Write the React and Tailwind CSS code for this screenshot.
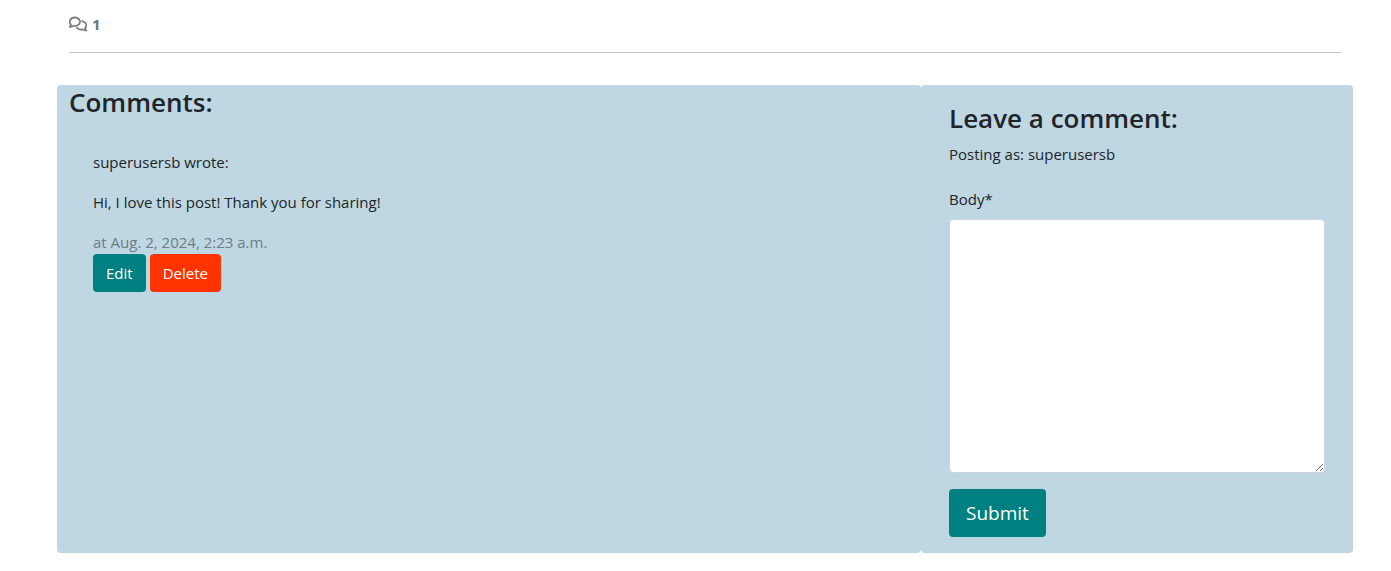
import React from "react";
import { FaRegComments } from "react-icons/fa6";

const heading = "mb-1.5 text-[26px] leading-[35px] font-semibold";
const button = "rounded px-[13px] py-[7px] leading-6 text-white";

function CommentList() {
  return (
    <section className="w-2/3 rounded bg-[#bed7e2] px-3">
      <h3 className={heading}>Comments:</h3>
      <article className="p-6">
        <p className="mb-4">superusersb wrote:</p>
        <p className="mb-4">Hi, I love this post! Thank you for sharing!</p>
        <p className="text-[#6c7d86]">at Aug. 2, 2024, 2:23 a.m.</p>
        <div className="flex gap-1">
          <button type="button" className={`${button} bg-[#008080]`}>Edit</button>
          <button type="button" className={`${button} bg-[#ff3300]`}>Delete</button>
        </div>
      </article>
    </section>
  );
}

function CommentForm() {
  return (
    <section className="w-1/3 rounded bg-[#bed7e2] px-7 py-4">
      <h3 className={heading}>Leave a comment:</h3>
      <p className="mb-[21px]">Posting as: superusersb</p>
      <form onSubmit={(event) => event.preventDefault()}>
        <label htmlFor="body" className="mb-2 block">Body*</label>
        <textarea
          id="body"
          name="body"
          rows={10}
          required
          className="mb-4 block w-full resize-y rounded border border-[#ced4da] bg-white px-3 py-1.5 leading-6"
        />
        <button type="submit" className="rounded bg-[#008080] px-[17px] py-2 text-[19px] leading-8 text-white">
          Submit
        </button>
      </form>
    </section>
  );
}

export default function App() {
  return (
    <main className="pt-3 pr-[38px] pb-4 pl-[57px] font-['Open_Sans',sans-serif] text-[15px] leading-6 text-[#212529]">
      <div className="px-3">
        <div className="flex items-center gap-[5px] text-[#6c757d]">
          <FaRegComments className="size-[18px] stroke-current stroke-[12px]" />
          <strong>1</strong>
        </div>
        <hr className="mt-4 mb-8 border-[#c0c2c4]" />
      </div>
      <div className="flex">
        <CommentList />
        <CommentForm />
      </div>
    </main>
  );
}
